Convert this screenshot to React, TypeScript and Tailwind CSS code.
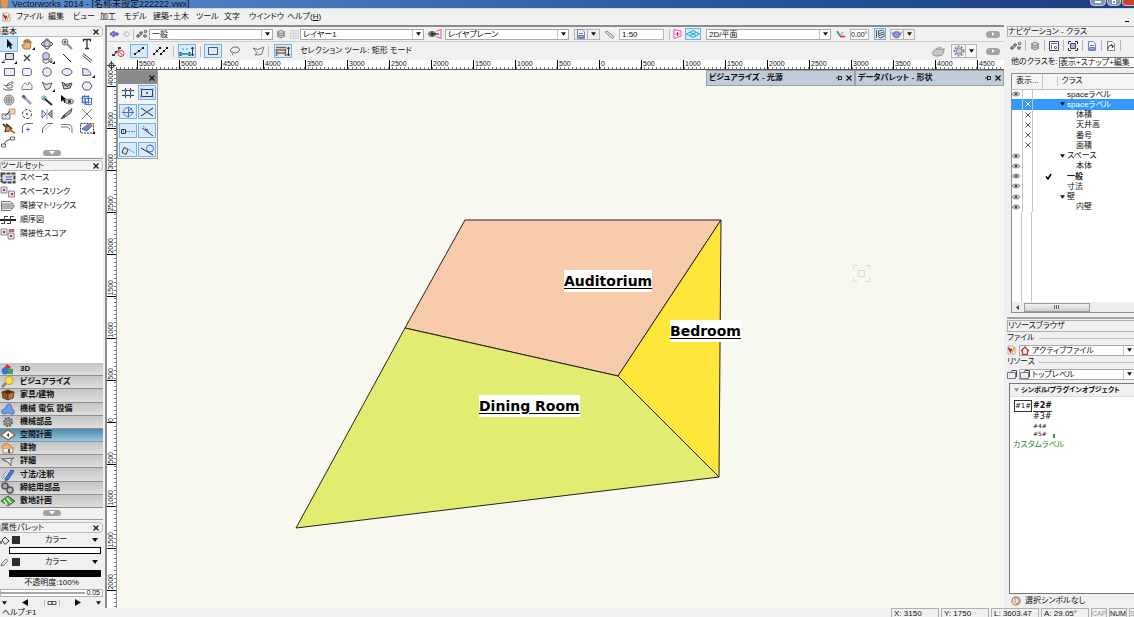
import type { ReactNode } from "react";
import clsx from "clsx";

const INK = "#3a3a3a";
const BLUE = "#3f6fd8";

function Svg({ w = 16, h = 12, children }: { w?: number; h?: number; children: ReactNode }) {
  return (
    <svg width={w} height={h} viewBox={`0 0 ${w} ${h}`} fill="none" stroke={INK} strokeWidth="1" className="block shrink-0">
      {children}
    </svg>
  );
}

function Caret({ small }: { small?: boolean }) {
  return (
    <svg width={small ? 5 : 6} height="4" viewBox="0 0 6 4" className="block shrink-0">
      <path d="M0 0h6L3 4z" fill="#111" />
    </svg>
  );
}

function Cross() {
  return (
    <svg width="6" height="6" viewBox="0 0 6 6" className="block shrink-0">
      <path d="M.5 .5l5 5M5.500 .5l-5 5" stroke="#111" strokeWidth="1.200" />
    </svg>
  );
}

function Pin() {
  return (
    <svg width="6" height="6" viewBox="0 0 6 6" className="block shrink-0" fill="none" stroke="#222">
      <path d="M0 3h2M2.500 .5v5M2.500 1.500h3v3h-3" />
    </svg>
  );
}

function Pill({ side }: { side?: boolean }) {
  return (
    <button
      aria-label="more"
      className={clsx("flex shrink-0 items-center justify-center rounded-sm bg-[#a2a2a2]", side ? "h-[7px] w-[14px]" : "h-[6px] w-[18px]")}
    >
      <svg width="6" height="4" viewBox="0 0 6 4" fill="#fff">
        {side ? <path d="M2 0v4l2.500-2z" /> : <path d="M0 0h6L3 3.500z" />}
      </svg>
    </button>
  );
}

/* ---------- shared glyphs ---------- */

const classGlyph = (
  <Svg w={12} h={10}>
    <g stroke="#666">
      <path d="M1 7l3-3M3 8l3-4M4 3.500h3M7 6.500h4" />
      <circle cx="2" cy="7" r="1.300" fill="#999" />
      <circle cx="5" cy="4" r="1.300" fill="#aaa" />
      <circle cx="9.500" cy="2.500" r="1.300" fill="#bbb" />
      <circle cx="9" cy="7" r="1.300" fill="#bbb" />
    </g>
  </Svg>
);

const layersGlyph = (
  <Svg w={10} h={10}>
    <g stroke="#888" fill="#d4d4d4">
      <path d="M1 7l4-2 4 2-4 2z" />
      <path d="M1 5l4-2 4 2-4 2z" />
      <path d="M1 3l4-2 4 2-4 2z" />
    </g>
  </Svg>
);

const sheetGlyph = (
  <Svg w={10} h={10}>
    <path d="M1.500 .5h4.500l2.500 2.500v6.500h-7z" fill="#f4f6ff" stroke="#7788b8" />
    <path d="M3 4.500h4M2.500 6.500h5v2h-5z" stroke="#6a7cc4" fill="#a9b6ea" />
  </Svg>
);

const folderGlyph = (
  <Svg w={10} h={9}>
    <path d="M.5 2.500h8v6h-8z" fill="#eef0f6" stroke="#778" />
    <path d="M4 2l1-1.500h4.500V7" stroke="#445" />
  </Svg>
);

const vwGlyph = (
  <Svg w={9} h={10}>
    <path d="M1 1h5l2 2v6H1z" fill="#fff" stroke="#aaa" />
    <path d="M1.500 2.500l2 4 1-3" stroke="#a3221c" strokeWidth="1.600" />
    <path d="M5 8l2.500-6" stroke="#f0a020" strokeWidth="1.600" />
  </Svg>
);

/* ---------- basic palette ---------- */

const basicTools: { name: string; more?: boolean; art: ReactNode }[] = [
  { name: "select", art: <path d="M6 1v9l2-2 1.500 3 1.500-.7L9.500 7.500H12z" fill="#111" stroke="none" /> },
  { name: "pan", more: true, art: <path d="M5 11L3 7.500l.5-1 1.500 1V2.500l1-.5.8 3L7 1.500 8 1l.7 4 .6-3.500 1 .2V5l1-2 .9.4L11 11z" fill="#efb478" stroke="#8a5a34" strokeWidth=".8" /> },
  { name: "flyover", art: <><ellipse cx="8" cy="6" rx="5.500" ry="2.500" /><ellipse cx="8" cy="6" rx="2.500" ry="5" /><path d="M5 3.500l3-1 3 1v4l-3 1.500-3-1.500z" fill="#c3cbe6" stroke="#667" /></> },
  { name: "zoom", art: <><circle cx="6" cy="4" r="3" fill="#e6eaf6" stroke="#777" /><path d="M8 6l5 5" stroke="#9b8664" strokeWidth="2" /><path d="M4.500 4h3M6 2.500v3" /></> },
  { name: "text", art: <path d="M4.500 3.500V1.500h7v2M8 1.500v9M6 10.500h4" strokeWidth="1.300" stroke="#333" /> },
  { name: "callout", more: true, art: <><path d="M4.500 1.500h8v6h-8z" fill="#d6def2" /><path d="M4 7.500l-3 3h3" /></> },
  { name: "locus", art: <path d="M5 3l6 6M11 3l-6 6" stroke="#2e4a3c" strokeWidth="1.400" /> },
  { name: "cube", more: true, art: <><circle cx="7" cy="4" r="3.500" fill="#c2caea" stroke="#667" /><path d="M4 7l3 1 3-1v3l-3 1.500L4 10z" fill="#e8ecfa" stroke="#667" /><path d="M12 6v4M10.500 9l1.500 2 1.500-2" /></> },
  { name: "line", art: <path d="M4 2l8 8" stroke="#222" /> },
  { name: "double line", art: <><path d="M4 1.500l9 7" /><path d="M3.500 3.500l8.500 7" /></> },
  { name: "rectangle", art: <path d="M3.500 2.500h10v7h-10z" fill="#eef1fc" stroke="#556" /> },
  { name: "rounded rectangle", art: <rect x="3.500" y="2.500" width="9" height="7" rx="2" fill="#eef1fc" stroke="#667" /> },
  { name: "circle", art: <circle cx="8" cy="6" r="4.300" fill="#e7eaf8" stroke="#556" /> },
  { name: "oval", art: <ellipse cx="8" cy="6" rx="5" ry="3.500" fill="#e7eaf8" stroke="#556" /> },
  { name: "arc", more: true, art: <path d="M3.500 2.500c5 0 8 2.500 8.500 6.500L4 9.500z" fill="#e0e5f6" stroke="#556" /> },
  { name: "freehand", art: <path d="M3 5c2 2 9-1 9-2.500S7 3 6 5s0 3.500 3 3 4-2.500 1-2.500M2 8.500c2 2 6 2 10 1" stroke="#555" /> },
  { name: "spline", art: <path d="M3 9.500V6l3-3 3 2 1-3 3 3v4.500z" fill="#f0f0f6" stroke="#888" /> },
  { name: "polygon", more: true, art: <path d="M3 2l4 2.500L13 3l-2 5-4 2z" fill="#dfe5f8" stroke="#555" /> },
  { name: "double polygon", art: <><path d="M3 2l4 2.500L13 3l-2 5-6 1z" fill="#cdd3e2" /><path d="M5 4.500l3 2 3-1.500" /></> },
  { name: "regular polygon", art: <path d="M5.500 2h5L13 6l-2.500 4h-5L3 6z" fill="#eef1fc" stroke="#556" /> },
  { name: "spiral", art: <><circle cx="8" cy="6" r="5" fill="#ccc" stroke="#888" /><circle cx="8" cy="6" r="3" stroke="#888" /><circle cx="8" cy="6" r="1.200" stroke="#777" /></> },
  { name: "eyedropper", art: <><path d="M3.500 1.500l3 3" strokeWidth="3" stroke="#566" /><path d="M6 4l6 6" strokeWidth="2.500" stroke="#9aa3dc" /></> },
  { name: "magic wand", art: <><path d="M5 1v6M2 4h6M3 2l4 4M7 2L3 6" stroke="#3fb3a0" /><path d="M6 5l7 6" strokeWidth="1.800" stroke="#222" /></> },
  { name: "visibility", art: <><path d="M2 1v7l2-2 1.500 3L7 8 5.500 5.500H8z" fill="#111" stroke="none" /><ellipse cx="10.500" cy="7.500" rx="4" ry="2.500" fill="#c6d2da" stroke="#667" /><circle cx="10.500" cy="7.500" r="1.500" fill="#222" stroke="none" /></> },
  { name: "symbol", art: <><path d="M3.500 2.500h6v6h-6z" stroke={BLUE} strokeWidth="1.400" /><path d="M6.500 4.500h6v6h-6z" stroke={BLUE} /><path d="M5.500 .5v11M1.500 4.500h12M9.500 1v10.500M2 8.500h11" stroke="#5577aa" strokeWidth=".6" /></> },
  { name: "reshape", art: <><path d="M1 6h8v5H1z" fill="#dcdfe8" stroke="#778" /><path d="M8 1h6v5H8z" fill="#f7cfa4" stroke="#b99" /><path d="M4 8l5-5" /></> },
  { name: "rotate", art: <><circle cx="8" cy="6" r="4.500" strokeDasharray="3 1.500" /><circle cx="8" cy="6" r=".8" fill={BLUE} stroke={BLUE} /></> },
  { name: "mirror", art: <><path d="M3 2l4 4-4 4z" fill="#dde2f4" stroke="#667" /><path d="M13 2L9 6l4 4z" fill="#98a0ba" stroke="#667" /><path d="M8 1v10" stroke={BLUE} strokeWidth=".7" /></> },
  { name: "split", art: <><path d="M13 .5L5 7l2 1.500 5-4z" fill="#a9a9a9" stroke="#555" /><path d="M5 7l-3 4 4-2z" fill="#444" /></> },
  { name: "connect", art: <path d="M3 1l5 5 5-5M8 6l-5 5M8 6l5 5" stroke="#777" /> },
  { name: "offset", art: <><path d="M2 2l4 4-2 4M5 2l6 5" stroke="#40321c" strokeWidth="1.700" /><circle cx="7" cy="7" r="2.500" fill="#d99b50" stroke="#6b461b" /><path d="M9 8l5 3" stroke="#a46a22" strokeWidth="2" /></> },
  { name: "fillet", art: <><path d="M3.500 11V6c0-3 2-4.500 5-4.500H14" stroke="#667" /><path d="M7 7.500h4M9 5.500v4" stroke={BLUE} /></> },
  { name: "chamfer", art: <><path d="M3.500 11V7l5-5.500H14" stroke="#667" /><path d="M5 9l7-7" stroke="#bcc3de" /></> },
  { name: "wall", art: <path d="M2 2.500h7c3 0 4 2 4 5V11M2 5h6c2 0 2.500 1.500 2.500 3" stroke="#778" /> },
  { name: "eraser", more: true, art: <><path d="M1.500 1.500h13v9.500h-13z" strokeDasharray="2 1" /><path d="M3 7l5-4 5 1-5 5z" fill="#5b8ce6" stroke="#4a72bd" /><path d="M8 3l2-1.500 4 1.500-1.500 2z" fill="#e06a52" stroke="none" /></> },
  { name: "connector", art: <><path d="M3.500 8c1-4 3-3 6-5" /><path d="M9.500 1h4v3h-4zM.5 8h4v3h-4z" fill="#eef1fc" stroke="#667" /></> },
];

const toolSet = [
  { label: "スペース", art: <><path d="M1.500 1.500h13v9h-13z" fill="#d7dae8" stroke="#444" strokeWidth="2" strokeDasharray="4 1" /><path d="M6 5h6M6 7.500h6" stroke="#5566a0" /></> },
  { label: "スペースリンク", art: <><path d="M1 1h6v6H1zM8.500 5h6v6h-6z" fill="#e4e4ee" stroke="#889" /><path d="M3 4h2M11 8h2" stroke="#d22" strokeWidth="2" /></> },
  { label: "隣接マトリックス", art: <><path d="M1.500 1.500h9l4 4.500-4 4.500h-9z" fill="#ededed" stroke="#777" /><path d="M1.500 4h11M1.500 6h12M1.500 8h11" stroke="#777" /></> },
  { label: "順序図", art: <><path d="M0 6h16" strokeWidth="2" stroke="#222" /><path d="M4 2.500h4M10 2.500h4M4.500 2v8M10.500 2v8M1 9.500h4M7 9.500h4" stroke="#444" /></> },
  { label: "隣接性スコア", art: <><path d="M1 1h6v6H1zM8 5h6v6H8z" fill="#e4e4ee" stroke="#889" /><path d="M9 1.500h5v2H9z" fill="#d88" stroke="#b66" /><path d="M3 4h2M10 8h2" stroke="#d22" strokeWidth="2" /></> },
];

const categories = [
  { label: "3D", art: <><path d="M7 1l4 3-3 4-4-3z" fill="#d9363e" stroke="none" /><circle cx="5" cy="8" r="3.500" fill="#3d74d4" stroke="none" /><path d="M8 5l5 1v5H8z" fill="#3aa65a" stroke="none" /></> },
  { label: "ビジュアライズ", art: <><circle cx="9" cy="4.500" r="4" fill="#f8e04a" stroke="#b99d2c" /><path d="M6 7l-4 4" stroke="#888" strokeWidth="3" /></> },
  { label: "家具/建物", art: <><path d="M2 3l6 2v6L3 9z" fill="#8c5228" stroke="#6b421f" /><path d="M8 5l6-2-1 6-5 2z" fill="#b67845" stroke="#6b421f" /><path d="M2 3l6-2 6 2-6 2z" fill="#4f3019" stroke="#6b421f" /></> },
  { label: "機械 電気 設備", art: <path d="M2 10c-2-3 2-4 3-4s1-5 4-5 2 4 3 5 3 1 2 4-4 0-6 0-4 2-6 0z" fill="#6f9ee6" stroke="#3f6cb6" /> },
  { label: "機械部品", art: <><circle cx="8" cy="6" r="4" fill="#999" stroke="#666" strokeWidth="2" strokeDasharray="2 1" /><circle cx="8" cy="6" r="1.500" fill="#ddd" stroke="#666" /></> },
  { label: "空間計画", art: <><path d="M8 1l7 5-7 5-7-5z" fill="#fff" stroke="#8a6a3e" strokeWidth="1.400" /><path d="M9 4v4L6.500 6z" fill="#333" stroke="none" /></>, active: true },
  { label: "建物", art: <><path d="M3 6h10v5H3z" fill="#f4eadb" stroke="#a08060" /><path d="M2 6c0-3 3-5 6-4l5 4" fill="#f0b070" stroke="#c4783a" /><path d="M8 7h2v4H8z" fill="#557" stroke="none" /></> },
  { label: "詳細", art: <><path d="M2 4l12-1-3 2v6l-3-4z" fill="#e8e8e8" stroke="#666" /><path d="M1 3l5 4" stroke="#666" /></> },
  { label: "寸法/注釈", art: <><path d="M5 10l6-9 3 1-6 9-3 .5z" fill="#3c7be0" stroke="#1d478f" strokeWidth=".7" /><path d="M1 8l6-6M2 10l3-3" stroke="#999" /></> },
  { label: "締結用部品", art: <><circle cx="5" cy="4" r="3" fill="#aaa" stroke="#555" strokeWidth="1.500" /><circle cx="10" cy="8" r="3" fill="#bbb" stroke="#555" strokeWidth="1.500" /></> },
  { label: "敷地計画", art: <><path d="M1 6l7-5 7 5-7 5z" fill="#58a548" stroke="#356d2a" /><path d="M4 5l3 5M7 3l4 5" stroke="#e8efdf" strokeWidth="1.500" /></> },
];

const snaps = [
  { name: "grid", on: false, art: <><path d="M5.500 1v10M10.500 1v10M2 3.500h12M2 8.500h12" /><path d="M4.500 3.500h2M9.500 3.500h2M4.500 8.500h2M9.500 8.500h2" stroke={BLUE} strokeWidth="2" /></> },
  { name: "object", on: true, art: <><path d="M2.500 2.500h11v7h-11z" /><path d="M1.500 2.500h2M12.500 2.500h2M1.500 9.500h2M12.500 9.500h2M7 6h2" stroke={BLUE} strokeWidth="2" /></> },
  { name: "angle", on: true, art: <><circle cx="8" cy="6" r="4.500" stroke="#778" /><path d="M2 6.500h12M8.500 .5v11M8 6l4-4" stroke={BLUE} /></> },
  { name: "intersection", on: true, art: <><path d="M2 2l12 8M2 10l12-8" stroke="#222" /><path d="M7 6h2" stroke={BLUE} strokeWidth="2" /></> },
  { name: "smart points", on: true, art: <><path d="M1.500 4.500h4v4h-4z" /><path d="M3 6.500h1" stroke={BLUE} strokeWidth="2" /><path d="M6 6.500h9" stroke={BLUE} strokeDasharray="1.500 1" /></> },
  { name: "distance", on: true, art: <><path d="M3 3l11 8" /><path d="M4 1l6 6" stroke={BLUE} strokeDasharray="2 1" /><path d="M6 5h3" stroke={BLUE} strokeWidth="2" /></> },
  { name: "edge", on: true, art: <><path d="M4 3.500l4 2-2 5-4-2z" /><path d="M4 3l11 6" stroke={BLUE} strokeDasharray="1.500 1" /></> },
  { name: "tangent", on: true, art: <><circle cx="11" cy="4.500" r="3.500" stroke={BLUE} /><path d="M2 4l12 7" stroke="#222" /></> },
];

const menus = [
  { label: "ファイル", w: "w-8" },
  { label: "編集", w: "w-[25px]" },
  { label: "ビュー", w: "w-[27px]" },
  { label: "加工", w: "w-6" },
  { label: "モデル", w: "w-[29px]" },
  { label: "建築・土木", w: "w-[43px]" },
  { label: "ツール", w: "w-7" },
  { label: "文字", w: "w-[25px]" },
  { label: "ウインドウ", w: "w-[38px]" },
];

const classRows = [
  { name: "spaceラベル", eye: true },
  { name: "spaceラベル", off: true, open: true, selected: true },
  { name: "体積", off: true, child: true },
  { name: "天井高", off: true, child: true },
  { name: "番号", off: true, child: true },
  { name: "面積", off: true, child: true },
  { name: "スペース", eye: true, open: true },
  { name: "本体", eye: true, child: true },
  { name: "一般", eye: true, current: true },
  { name: "寸法", eye: true },
  { name: "壁", eye: true, open: true },
  { name: "内壁", eye: true, child: true },
];

const topMarks = [5500, 5000, 4500, 4000, 3500, 3000, 2500, 2000, 1500, 1000, 500, 0, 500, 1000, 1500, 2000, 2500, 3000, 3500, 4000, 4500];
const sideMarks = [3500, 3000, 2500, 2000, 1500, 1000, 500, 0, 500, 1000, 1500, 2000];

function Picker({ label, value, className, icon }: { label: string; value: string; className: string; icon?: ReactNode }) {
  return (
    <div className={clsx("flex h-[11px] shrink-0 items-center border border-[#a9a9a9] bg-white", className)}>
      {icon}
      <select aria-label={label} className="h-full min-w-0 flex-1 appearance-none bg-transparent pl-0.5 text-[8px] leading-[9px] outline-none">
        <option>{value}</option>
      </select>
      <span className="pointer-events-none flex h-full w-[11px] items-center justify-center border-l border-[#c4c4c4]">
        <Caret small />
      </span>
    </div>
  );
}

function ToolButton({ name, on, className, children }: { name: string; on?: boolean; className?: string; children: ReactNode }) {
  return (
    <button
      aria-label={name}
      className={clsx("flex shrink-0 items-center justify-center", on && "border border-[#6fb3ee] bg-[#dbeafa]", className)}
    >
      {children}
    </button>
  );
}

function Divider({ className }: { className?: string }) {
  return <span className={clsx("h-[11px] w-px shrink-0 bg-[#bdbdbd]", className)} />;
}

function PaletteTitle({ children }: { children: ReactNode }) {
  return (
    <div className="flex h-[11px] shrink-0 items-center justify-between rounded-sm border border-[#bcbcbc] bg-[#f3f3f3] pr-[3px]">
      <h2>{children}</h2>
      <button aria-label="close">
        <Cross />
      </button>
    </div>
  );
}

function ViewBar() {
  return (
    <div className="flex h-[14px] items-center">
      <ToolButton name="back" className="w-[14px]">
        <Svg w={10} h={8}><path d="M1 4l4-3v2h4v2H5v2z" fill="#8a93dc" stroke="#444a99" /></Svg>
      </ToolButton>
      <ToolButton name="forward" className="w-3">
        <Svg w={8} h={8}><path d="M7 4L3 1v2H1v2h2v2z" fill="#f4f4f4" stroke="#bbb" /></Svg>
      </ToolButton>
      <Divider />
      <ToolButton name="classes" className="w-[15px]">{classGlyph}</ToolButton>
      <Picker label="class" value="一般" className="w-[124px]" />
      <ToolButton name="layers" className="w-[15px]">{layersGlyph}</ToolButton>
      <ToolButton name="layer options" className="w-3">
        <Svg w={9} h={9}><path d="M.5 .5h8v8h-8zM.5 3.500h8M.5 6h8M3.500 .5v8M6 .5v8" stroke="#bbb" strokeDasharray="1 1" /></Svg>
      </ToolButton>
      <Picker label="layer" value="レイヤー1" className="w-[124px]" />
      <ToolButton name="plane" className="w-[21px]">
        <Svg w={14} h={10}>
          <ellipse cx="4" cy="5" rx="3.500" ry="2.500" fill="#b9926c" stroke="#6b5340" />
          <circle cx="4" cy="5" r="1.200" fill="#111" />
          <path d="M5 5h6" stroke="#111" />
          <path d="M8 2l5-1.500v9L8 7.500" stroke="#e254c8" />
        </Svg>
      </ToolButton>
      <Picker label="active plane" value="レイヤプレーン" className="w-[124px]" />
      <ToolButton name="saved views" className="ml-[5px] h-[11px] w-[26px] border border-[#b4b4b4]">
        <span className="flex flex-1 justify-center">{sheetGlyph}</span>
        <span className="flex h-full w-3 items-center justify-center border-l border-[#b4b4b4]"><Caret small /></span>
      </ToolButton>
      <ToolButton name="scale" className="w-[19px]">
        <Svg w={11} h={9}><path d="M1 2l2-1 7 5.500-1.500 2z" fill="#ddd" stroke="#888" /></Svg>
      </ToolButton>
      <input aria-label="scale value" defaultValue="1:50" className="h-[11px] w-[45px] shrink-0 border border-[#b4b4b4] bg-white pl-0.5 text-[8px] outline-none" />
      <Divider className="ml-[5px]" />
      <ToolButton name="elevation" className="w-[15px]">
        <Svg w={9} h={10}><path d="M1 .5l7 1.500v5L1 9.500z" stroke="#e254c8" fill="#fdeafa" /><path d="M4.500 3v4M2.500 5h4" stroke="#d33" /></Svg>
      </ToolButton>
      <ToolButton name="top view" on className="h-3 w-4">
        <Svg w={14} h={8}><path d="M7 .5L13.500 4 7 7.500.5 4z" fill="#bdeef6" stroke="#2aa7c6" /><path d="M4 2.500l6 3M10 2.500l-6 3" stroke="#2aa7c6" /></Svg>
      </ToolButton>
      <Picker label="view" value="2D/平面" className="ml-[5px] w-[125px]" />
      <ToolButton name="axes" className="w-[19px]">
        <Svg w={10} h={8}><path d="M1 1l3 5" stroke="#2aa06a" strokeWidth="1.600" /><path d="M4 6l3-4" stroke="#7788cc" /><path d="M4 6.500h5" stroke="#c33" strokeWidth="1.600" /></Svg>
      </ToolButton>
      <input aria-label="angle" defaultValue="0.00°" className="h-[11px] w-[19px] shrink-0 border border-[#b4b4b4] bg-white text-[7px] outline-none" />
      <ToolButton name="unified view" on className="ml-[5px] h-3 w-3">
        <Svg w={10} h={10}><path d="M1.500 1v8M3.500 2l4-1 1.500 1.500v5l-4 1.500-1.500-1.500zM4 4.500l4-1M4 6.500l4-1" stroke="#555" /></Svg>
      </ToolButton>
      <ToolButton name="render" className="ml-1 h-[11px] w-[25px] border border-[#b4b4b4]">
        <span className="flex flex-1 justify-center">
          <Svg w={12} h={9}><path d="M2 4c0-3 7-3 7 0 0 5-7 5-7 0z" fill="#8f9ad8" stroke="#525ca0" /><path d="M9 4l2.500-2M2 4L.5 2.500" stroke="#525ca0" /></Svg>
        </span>
        <span className="flex h-full w-[11px] items-center justify-center border-l border-[#b4b4b4]"><Caret small /></span>
      </ToolButton>
      <div className="mr-1 ml-auto"><Pill side /></div>
    </div>
  );
}

function ModeBar() {
  return (
    <div className="flex h-[19px] items-center border-t border-[#cfcfcf]">
      <ToolButton name="no scaling" className="w-[23px]">
        <Svg w={13} h={11}><path d="M1 9l3-2 4-5" /><path d="M0 9h3M3 6h2M6 2h3" strokeWidth="2" /><circle cx="9" cy="7.500" r="3" stroke="#d8323a" fill="#fff" /><path d="M7 5.500l4 4" stroke="#d8323a" /></Svg>
      </ToolButton>
      <ToolButton name="single scaling" on className="h-[14px] w-[18px]">
        <Svg w={14} h={10}><path d="M3 8l8-6" /><path d="M2 8h2M6 5h2M10 2h2" stroke="#111" strokeWidth="2" /></Svg>
      </ToolButton>
      <ToolButton name="multiple scaling" className="w-[25px]">
        <Svg w={15} h={10}><path d="M1 8l6-6M8 8l6-6" /><path d="M0 8h2M3 5h2M6 2h2M7 8h2M10 5h2M13 2h2" stroke="#111" strokeWidth="2" /></Svg>
      </ToolButton>
      <Divider />
      <ToolButton name="wall insertion" on className="ml-1 h-[14px] w-[18px]">
        <Svg w={16} h={11}><path d="M3 3h2M7 3h2" stroke="#8cc0ea" strokeWidth="2" /><path d="M1.500 6v4M10.500 6v4" strokeWidth="2" /><path d="M1 8h10" stroke="#2aa7c6" strokeWidth="2" /><path d="M13.500 1v9M12 3l1.500-2L15 3M12 8l1.500 2L15 8" /></Svg>
      </ToolButton>
      <Divider className="ml-1" />
      <ToolButton name="rectangle mode" on className="ml-[3px] h-[14px] w-[18px]">
        <Svg w={14} h={10}><path d="M2.500 1.500h9v7h-9z" stroke="#556" /></Svg>
      </ToolButton>
      <ToolButton name="lasso mode" className="w-[26px]">
        <Svg w={12} h={10}><path d="M3 9c2-1 0-2-1-3C0 3 4 1 7 1s5 3 2 5-5 0-6 0" stroke="#666" /></Svg>
      </ToolButton>
      <ToolButton name="polygon mode" className="w-5">
        <Svg w={13} h={10}><path d="M1 2l5 1.500L12 1 9.500 8.500 3 9l2-2.500z" stroke="#777" /></Svg>
      </ToolButton>
      <Divider />
      <ToolButton name="interactive mode" on className="ml-[5px] h-[14px] w-[18px]">
        <Svg w={16} h={11}><path d="M1.500 10V3M10.500 10V3" stroke="#8a6040" strokeWidth="1.500" /><path d="M1 1.500h10M2 4h8M2 7h8" stroke="#8a6040" strokeWidth="1.500" /><path d="M13.500 1v9M12 3l1.500-2L15 3M12 8l1.500 2L15 8" /></Svg>
      </ToolButton>
      <p className="ml-2">セレクション ツール: 矩形 モード</p>
      <ToolButton name="teapot" className="ml-auto w-4">
        <Svg w={14} h={11}><path d="M2 6c0-3 9-4 10-2l1-1.500C13 9 10 10 6 10S1 8 2 6z" fill="#c9c9c9" stroke="#8a8a8a" /><path d="M5 3l4-2 2 1.500" stroke="#999" /></Svg>
      </ToolButton>
      <ToolButton name="preferences" className="ml-[5px] h-[14px] w-[26px] border border-[#b4b4b4] bg-[#f7f7f7]">
        <span className="flex flex-1 justify-center">
          <Svg w={12} h={12}><circle cx="6" cy="6" r="4.500" stroke="#889" strokeWidth="2" strokeDasharray="2 1.200" /><circle cx="6" cy="6" r="3" fill="#c9cde0" stroke="#889" /></Svg>
        </span>
        <span className="flex h-full w-[11px] items-center justify-center border-l border-[#b4b4b4]"><Caret small /></span>
      </ToolButton>
      <div className="mr-1 ml-[9px]"><Pill side /></div>
    </div>
  );
}

function LeftColumn() {
  return (
    <aside className="flex w-[103px] shrink-0 flex-col pt-px">
      <PaletteTitle>基本</PaletteTitle>
      <div className="grid grid-cols-[17px_20px_20px_19px_22px] bg-white">
        {basicTools.map((tool, i) => (
          <button
            key={tool.name}
            aria-label={tool.name}
            className={clsx("flex h-[14px] items-center justify-center", i === 0 && "bg-[#cfe4fb] outline outline-[#7ab8f0]")}
          >
            <Svg>
              {tool.art}
              {tool.more && <path d="M16 9v3h-3z" fill="#111" stroke="none" />}
            </Svg>
          </button>
        ))}
      </div>
      <div className="flex h-2 shrink-0 items-center justify-center bg-white"><Pill /></div>
      <div className="mt-px border-t border-[#9a9a9a] pt-px"><PaletteTitle>ツールセット</PaletteTitle></div>
      <ul className="min-h-0 flex-1 bg-white">
        {toolSet.map((t) => (
          <li key={t.label} className="flex h-[14px] items-center gap-1">
            <Svg>{t.art}</Svg>
            {t.label}
          </li>
        ))}
      </ul>
      <div className="grid h-[145px] shrink-0 grid-rows-11">
        {categories.map((c) => (
          <button
            key={c.label}
            className={clsx(
              "flex min-h-0 items-center gap-1 border-b border-[#8f8f8f] text-left font-bold",
              c.active ? "bg-linear-to-b from-[#4e88a8] to-[#93c9e6]" : "bg-linear-to-b from-[#c4c4c4] to-[#dedede]",
            )}
          >
            <Svg>{c.art}</Svg>
            {c.label}
          </button>
        ))}
      </div>
      <div className="flex h-[9px] shrink-0 items-center justify-center"><Pill /></div>
      <div className="mt-0.5 border-t border-[#9a9a9a] pt-0.5"><PaletteTitle>属性パレット</PaletteTitle></div>
      <div className="flex h-[14px] shrink-0 items-center pr-[5px]">
        <Svg w={10} h={9}><path d="M2 4l3-3 4 4-4 3.500z" fill="#eee" /><path d="M1 5v3" stroke="#555" strokeWidth="1.500" /></Svg>
        <span className="ml-0.5 size-2 bg-[#2e2e2e]" />
        <span className="flex-1 pl-4 text-center">カラー</span>
        <span className="w-4" />
        <Caret />
      </div>
      <div className="mr-0.5 ml-[9px] h-[7px] shrink-0 border border-black bg-white" />
      <div className="flex h-4 shrink-0 items-center pr-[5px]">
        <Svg w={10} h={9}><path d="M1 8l1-3 4-4 2 1.500L4 7z" fill="#e8e8e8" stroke="#778" /></Svg>
        <span className="ml-0.5 size-2 bg-[#2e2e2e]" />
        <span className="flex-1 pl-4 text-center">カラー</span>
        <span className="w-4" />
        <Caret />
      </div>
      <div className="mr-0.5 ml-[9px] h-[7px] shrink-0 bg-black" />
      <p className="h-3 shrink-0 text-center leading-3">不透明度:100%</p>
      <div className="flex h-2 shrink-0 items-center justify-between border border-[#b4b4b4] bg-white pr-0.5 text-[7px]">
        <span className="h-0.5 w-[84px] bg-[#a6a6a6]" />
        0.05
      </div>
      <div className="flex h-[11px] shrink-0 items-center justify-between px-0.5">
        <Caret small />
        <Svg w={7} h={7}><path d="M6 0v7L0 3.500z" fill="#111" stroke="none" /></Svg>
        <span className="flex w-4 justify-center border-x border-[#bbb]">
          <Svg w={10} h={6}><path d="M1 1.500h4v3H1zM5 1.500h4v3H5z" stroke="#555" /></Svg>
        </span>
        <Svg w={7} h={7}><path d="M1 0v7l6-3.500z" fill="#111" stroke="none" /></Svg>
        <Caret small />
      </div>
    </aside>
  );
}

function DockedPalette({ title }: { title: string }) {
  return (
    <div className="flex h-4 w-[149px] items-center gap-1 border border-[#9aa0a6] bg-[#bfccd9] px-0.5 font-bold">
      <span className="flex-1">{title}</span>
      <Pin />
      <Cross />
    </div>
  );
}

function RoomLabel({ className, children }: { className: string; children: ReactNode }) {
  return (
    <span className={clsx("absolute bg-white font-['DejaVu_Sans',sans-serif] text-[14px] leading-[22px] font-bold whitespace-nowrap text-black underline underline-offset-2", className)}>
      {children}
    </span>
  );
}

function Drawing() {
  return (
    <main className="relative min-w-0 flex-1 overflow-hidden border-l border-[#8a8a8a] bg-[#f9f8f0]">
      <svg width="888" height="538" viewBox="0 0 888 538" className="block" stroke="#222" strokeWidth="1">
        <path d="M348 150H604L501 306 288 258z" fill="#f8cbab" />
        <path d="M288 258L501 306 602 407 179 458z" fill="#e2ec70" />
        <path d="M604 150L602 407 501 306z" fill="#ffe63a" />
        <g fill="none" stroke="#dcdcd4">
          <path d="M741.500 200.500h6v6h-6zM736.500 199v-3.500h4M748.500 195.500h4v3.500M752.500 208v3.500h-4M740.500 211.500h-4V208" />
        </g>
      </svg>
      <RoomLabel className="top-[200px] left-[447px]">Auditorium</RoomLabel>
      <RoomLabel className="top-[250px] left-[553px]">Bedroom</RoomLabel>
      <RoomLabel className="top-[325px] left-[362px]">Dining Room</RoomLabel>

      <section aria-label="snapping" className="absolute top-0 left-0 border border-[#9a9a9a] bg-[#f4f4f4]">
        <div className="flex h-[13px] items-center justify-end bg-[#8a8a8a] pr-0.5"><Cross /></div>
        <div className="grid grid-cols-2 gap-x-px gap-y-1 p-px">
          {snaps.map((s) => (
            <ToolButton key={s.name} name={s.name} on={s.on} className="h-[15px] w-[18px]">
              <Svg>{s.art}</Svg>
            </ToolButton>
          ))}
        </div>
      </section>

      <div className="absolute top-0 right-0 flex">
        <DockedPalette title="ビジュアライズ - 光源" />
        <DockedPalette title="データパレット - 形状" />
      </div>
    </main>
  );
}

function TopRuler() {
  return (
    <div className="flex h-[10px] shrink-0 overflow-hidden bg-white">
      <span className="flex w-[9px] shrink-0 items-center justify-center bg-[#f0f0f0]">
        <Svg w={9} h={9}><circle cx="4.500" cy="4.500" r="2.500" /><path d="M0 4.500h9M4.500 0v9" /></Svg>
      </span>
      <div className="flex min-w-0 flex-1 overflow-hidden border-b border-[#555] bg-[repeating-linear-gradient(90deg,#777_0_1px,transparent_1px_4px)] bg-[length:100%_2px] bg-bottom bg-no-repeat pl-[21px]">
        {topMarks.map((m, i) => (
          <span key={i} className="w-[42px] shrink-0 border-l border-black pl-px text-[7px] leading-[7px]">{m}</span>
        ))}
      </div>
    </div>
  );
}

function SideRuler() {
  const mark = "flex shrink-0 flex-col justify-end border-b border-black";
  const text = "rotate-180 text-[7px] leading-[7px] [writing-mode:vertical-rl]";
  return (
    <div className="w-[9px] shrink-0 overflow-hidden bg-white bg-[repeating-linear-gradient(180deg,#777_0_1px,transparent_1px_4px)] bg-[length:2px_100%] bg-right bg-no-repeat">
      <div className={clsx(mark, "h-[17px]")}><span className={text}>4000</span></div>
      {sideMarks.map((m, i) => (
        <div key={i} className={clsx(mark, "h-[42px]")}><span className={text}>{m}</span></div>
      ))}
    </div>
  );
}

function Eye() {
  return (
    <Svg w={8} h={6}>
      <ellipse cx="4" cy="3" rx="3.500" ry="2" fill="#d4d4d4" stroke="#888" />
      <circle cx="4" cy="3" r="1.300" fill="#444" stroke="none" />
    </Svg>
  );
}

function ClassList() {
  return (
    <div className="ml-1 flex h-[240px] shrink-0 flex-col border border-r-0 border-[#8f8f8f] bg-white">
      <table className="h-[138px] w-full table-fixed border-collapse">
        <colgroup>
          <col className="w-[10px]" />
          <col className="w-[10px]" />
          <col className="w-[10px]" />
          <col />
        </colgroup>
        <thead>
          <tr className="h-[15px] border-b border-[#c4c4c4] bg-[#f4f4f4] text-left">
            <th colSpan={3} className="border-r border-[#c4c4c4] p-0 pl-1 font-normal">表示...</th>
            <th className="p-0 font-normal">
              <span className="ml-[14px] block border-l border-[#c4c4c4] pl-1">クラス</span>
            </th>
          </tr>
        </thead>
        <tbody>
          {classRows.map((row, i) => (
            <tr key={i} className={clsx("h-[10px] leading-[9px]", row.selected && "bg-[#3399ff] text-white")}>
              <td className="border-r border-[#c8c8c8] p-0">{row.eye && <Eye />}</td>
              <td className="border-r border-[#c8c8c8] p-0 pl-0.5">
                {row.off && <Svg w={6} h={6}><path d="M.5 .5l5 5M5.500 .5l-5 5" stroke={row.selected ? "#fff" : "#555"} /></Svg>}
              </td>
              <td className="p-0" />
              <td className="p-0">
                <div className={clsx("flex items-center whitespace-nowrap", row.child ? "pl-[34px]" : row.current ? "pl-[3px] font-bold" : row.open ? "pl-[18px]" : "pl-[25px]")}>
                  {row.open && <span className="w-[7px]"><Caret small /></span>}
                  {row.current && <span className="w-[22px]"><Svg w={7} h={7}><path d="M1 3.500L3 6l3-5" stroke="#000" strokeWidth="1.600" /></Svg></span>}
                  {row.name}
                </div>
              </td>
            </tr>
          ))}
        </tbody>
      </table>
      <div className="grid flex-1 grid-cols-[10px_10px_1fr]">
        <span className="border-r border-[#c8c8c8]" />
        <span className="border-r border-[#c8c8c8]" />
      </div>
      <div className="flex h-[10px] shrink-0 items-center bg-[#eee]">
        <span className="flex w-3 justify-center"><Svg w={4} h={5}><path d="M3 0v5L0 2.500z" fill="#444" stroke="none" /></Svg></span>
        <span className="flex h-[9px] w-[66px] items-center justify-center border border-[#9a9a9a] bg-linear-to-b from-[#f2f2f2] to-[#cfcfcf]">
          <Svg w={6} h={4}><path d="M.5 0v4M2.500 0v4M4.500 0v4" stroke="#666" /></Svg>
        </span>
      </div>
    </div>
  );
}

const navTabs: { name: string; art: ReactNode }[] = [
  { name: "classes", art: classGlyph },
  { name: "layers", art: layersGlyph },
  { name: "sheets", art: <Svg w={10} h={10}><path d="M.5 .5h9v9h-9z" fill="#fff" stroke="#446" /><path d="M5.500 5.500h2v2h-2zM2 2.500h6M2.500 4v4" stroke="#668" /></Svg> },
  { name: "viewports", art: <Svg w={10} h={10}><path d="M2.500 2.500h5v5h-5z" fill="#aab4e4" stroke="#446" /><path d="M.5 3V.5H3M7 .5h2.500V3M9.500 7v2.500H7M3 9.500H.5V7" stroke="#222" /></Svg> },
  { name: "saved views", art: sheetGlyph },
  { name: "references", art: <Svg w={10} h={10}><path d="M1.500 .5h4.500l2.500 2.500v6.500h-7z" fill="#fff" stroke="#888" /><path d="M2 8c0-3 2-4 5-3M5 3.500L7.500 5 6 7" stroke="#222" /></Svg> },
];

function FieldLine({ children }: { children: ReactNode }) {
  return (
    <div className="flex h-3 shrink-0 items-center gap-1">
      <span>{children}</span>
      <span className="h-px flex-1 bg-[#c0c0c0]" />
    </div>
  );
}

function RightColumn() {
  return (
    <aside className="flex w-[127px] shrink-0 flex-col overflow-hidden pt-px">
      <h2 className="flex h-[11px] shrink-0 items-center border border-r-0 border-[#b0b0b0]">ナビゲーション - クラス</h2>
      <div className="flex h-[17px] shrink-0 items-center">
        {navTabs.map((t) => (
          <button key={t.name} aria-label={t.name} className="flex h-[11px] w-[19px] items-center justify-center border-r border-[#b4b4b4]">
            {t.art}
          </button>
        ))}
      </div>
      <div className="flex h-4 shrink-0 items-center pl-1 whitespace-nowrap">
        <label htmlFor="others" className="w-12">他のクラスを:</label>
        <select id="others" className="h-[11px] flex-1 appearance-none border border-r-0 border-[#777] bg-white text-[8px] leading-[9px]">
          <option>表示+スナップ+編集</option>
        </select>
      </div>
      <div className="mt-[3px] flex shrink-0 flex-col"><ClassList /></div>
      <div className="mt-1 h-[3px] shrink-0 border-t-2 border-[#a2a2a2]" />
      <h2 className="flex h-3 shrink-0 items-center border border-r-0 border-[#b0b0b0]">リソースブラウザ</h2>
      <FieldLine>ファイル</FieldLine>
      <div className="flex h-3 shrink-0 items-center gap-[3px]">
        {vwGlyph}
        <Picker
          label="file"
          value="アクティブファイル"
          className="flex-1 border-r-0"
          icon={<Svg w={10} h={9}><path d="M1 5l4-4 4 4M2.500 4.500v4h5v-4" stroke="#c4302c" strokeWidth="1.300" /></Svg>}
        />
      </div>
      <FieldLine>リソース</FieldLine>
      <div className="flex h-3 shrink-0 items-center gap-0.5">
        {folderGlyph}
        <Picker label="resource" value="トップレベル" className="flex-1 border-r-0" icon={folderGlyph} />
      </div>
      <section className="mt-[3px] ml-0.5 min-h-0 flex-1 border border-r-0 border-[#777] bg-white">
        <h3 className="flex h-[13px] items-center gap-0.5 border-b border-[#ddd] bg-[#f0f0f0] pl-1 text-[7px] font-bold whitespace-nowrap">
          <svg width="5" height="4" viewBox="0 0 6 4"><path d="M0 0h6L3 4z" fill="#888" /></svg>
          シンボル/プラグインオブジェクト
        </h3>
        <div className="flex gap-px pt-[3px] pl-1 font-['DejaVu_Sans',sans-serif] text-[8px]">
          <span className="h-3 w-[18px] border border-[#333] text-[7px] leading-[10px]">#1#</span>
          <div>
            <p className="border-b border-[#333] leading-[11px] font-bold">#2#</p>
            <p className="leading-[10px]">#3#</p>
            <p className="text-[6px] leading-2">#4#</p>
            <p className="text-[6px] leading-2">#5#</p>
          </div>
          <span className="h-1 w-0.5 self-end bg-[#2f9a3f]" />
        </div>
        <p className="pt-0.5 pl-[3px] text-[#1d8a1d]">カスタムラベル</p>
      </section>
      <div className="flex h-[14px] shrink-0 items-center gap-1 pl-1">
        <Svg w={10} h={10}><circle cx="5" cy="5" r="4" stroke="#e88a2a" strokeWidth="1.500" /><path d="M4 2h4v4L6 8 4 6z" fill="#dfe8fa" stroke="#7a94c8" /></Svg>
        選択シンボルなし
      </div>
    </aside>
  );
}

const statusCells = ["X: 3150", "Y: 1750", "L: 3603.47", "A: 29.05°"];

export default function App() {
  return (
    <div className="flex h-screen flex-col overflow-hidden bg-[#f0f0f0] font-['Liberation_Sans','Noto_Sans_CJK_JP',sans-serif] text-[8px] leading-[10px] text-[#111] [font-feature-settings:'palt']">
      <header className="flex h-[9px] shrink-0 items-center overflow-hidden border-b border-[#c9d6e6] bg-linear-to-r from-[#5c8fd0] via-[#28559c] via-65% to-[#1c3f80]">
        <span className="ml-px h-2 w-[7px] rounded-b-sm bg-[#e8943a]" />
        <h1 className="pl-1 text-[9px] leading-2 whitespace-nowrap">Vectorworks 2014 - [名称未設定222222.vwx]</h1>
        <div className="mb-1 ml-auto flex h-2 gap-px">
          <button aria-label="minimize" className="flex w-4 items-end justify-center rounded-b-sm border border-[#c3cede] bg-[#8393b0] pb-0.5"><span className="h-0.5 w-1.5 bg-white" /></button>
          <button aria-label="restore" className="flex w-[14px] items-end justify-center rounded-b-sm border border-[#c3cede] bg-[#8393b0] pb-px"><span className="size-1 border border-white" /></button>
          <button aria-label="close" className="w-3 rounded-bl-sm border border-r-0 border-[#e4b5ab] bg-[#c8452c]" />
        </div>
      </header>

      <nav className="flex h-4 shrink-0 items-center pl-0.5 whitespace-nowrap">
        <span className="w-[14px]">{vwGlyph}</span>
        {menus.map((m) => (
          <button key={m.label} className={clsx("shrink-0 text-left", m.w)}>{m.label}</button>
        ))}
        <button>ヘルプ(<u>H</u>)</button>
        <span className="mt-2 mr-[5px] ml-auto h-px w-1 bg-black" />
      </nav>

      <div className="flex min-h-0 flex-1">
        <LeftColumn />
        <div className="ml-0.5 flex min-w-0 flex-1 flex-col border-t-2 border-l-2 border-[#8c8c8c]">
          <ViewBar />
          <ModeBar />
          <TopRuler />
          <div className="flex min-h-0 flex-1">
            <SideRuler />
            <Drawing />
          </div>
        </div>
        <div className="w-[3px] shrink-0" />
        <RightColumn />
      </div>

      <footer className="flex h-[9px] shrink-0 items-start overflow-hidden whitespace-nowrap">
        <span className="pl-0.5">ヘルプ:F1</span>
        <div className="ml-auto flex w-[243px] shrink-0 gap-0.5 overflow-hidden">
          {statusCells.map((text) => (
            <span key={text} className="w-12 shrink-0 border border-[#b0b0b0] pl-0.5">{text}</span>
          ))}
          <span className="w-4 shrink-0 border border-[#b0b0b0] text-[7px] text-[#999]">CAP</span>
          <span className="w-[18px] shrink-0 border border-[#b0b0b0] text-[7px]">NUM</span>
          <span className="w-5 shrink-0 border border-[#b0b0b0] text-[7px] text-[#999]">SCRL</span>
        </div>
      </footer>
    </div>
  );
}
